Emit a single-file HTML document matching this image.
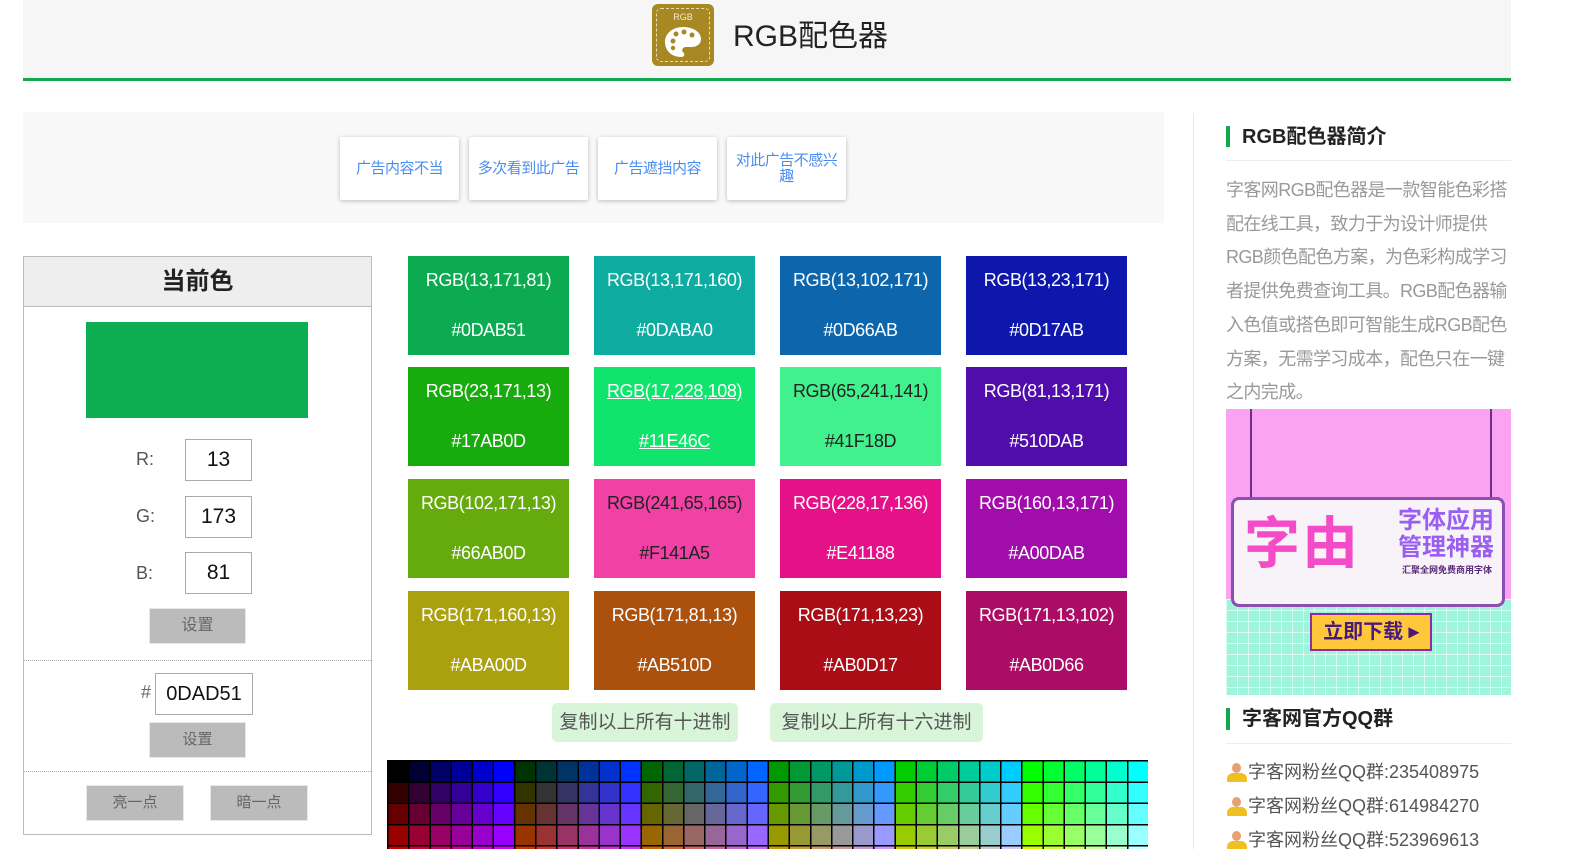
<!DOCTYPE html>
<html><head><meta charset="utf-8"><style>
*{margin:0;padding:0;box-sizing:border-box}
html,body{width:1580px;height:849px;overflow:hidden}
body{background:#fff;position:relative;font-family:"Liberation Sans","Noto Sans CJK SC",sans-serif}
.a{position:absolute}
.hdr{left:23px;top:0;width:1488px;background:#f6f6f6;border-bottom:3px solid #12a84f;height:81px}
.adb{width:119px;height:63px;top:137px;background:#fff;box-shadow:0 1px 4px rgba(0,0,0,.25);border-radius:2px;color:#4a8df0;font-size:15px;display:flex;align-items:center;justify-content:center;text-align:center;line-height:16px;padding:0 6px;letter-spacing:-.5px}
.card{width:161px;height:99px;color:#fff;font-size:18px;text-align:center;letter-spacing:-.4px}
.card div{height:49.5px;line-height:49.5px}
.dk{color:#222}
.inp{border:1px solid #aaa;background:#fff;font-size:21px;color:#111;text-align:center;line-height:40px}
.lbl{font-size:18px;color:#555}
.btn{background:#bbb;color:#666;font-size:16px;text-align:center;border:1px solid #e8e8e8}
.copy{top:703px;height:39px;background:#d9f5d9;border-radius:5px;color:#555;font-size:19px;text-align:center;line-height:39px}
.qq{left:1226px;font-size:18px;color:#555;height:26px;line-height:26px;display:flex;align-items:center}
.qq i{display:inline-block;width:22px;height:20px;position:relative}
.qq i:before{content:"";position:absolute;left:6px;top:1px;width:9px;height:10px;border-radius:50%;background:#e8a070}
.qq i:after{content:"";position:absolute;left:1px;top:11px;width:20px;height:9px;border-radius:6px 6px 1px 1px;background:#f0c020}
</style></head><body>
<div class="a hdr"></div>
<div class="a" style="left:652px;top:4px;width:62px;height:62px;background:#a88822;border-radius:6px;"></div>
<div class="a" style="left:656px;top:8px;width:54px;height:54px;border:1px dashed #e8dcb0;border-radius:5px"></div>
<div class="a" style="left:652px;top:12px;width:62px;text-align:center;color:#f4ecd0;font-size:9px">RGB</div>
<svg class="a" style="left:664px;top:26px" width="38" height="32" viewBox="0 0 38 32"><path d="M19 1C8 1 1 8 1 16c0 8 6 15 16 15 4 0 4-3 2-5-2-2 0-5 3-5h5c6 0 10-3 10-8C37 6 29 1 19 1z" fill="#fff"/><circle cx="9" cy="15" r="2.5" fill="#a88822"/><circle cx="12" cy="8" r="2.5" fill="#a88822"/><circle cx="20" cy="6" r="2.5" fill="#a88822"/><circle cx="28" cy="9" r="2.5" fill="#a88822"/><circle cx="9" cy="22" r="2.2" fill="#a88822"/></svg>
<div class="a" style="left:733px;top:17px;font-size:30px;color:#222;line-height:40px">RGB配色器</div>

<div class="a" style="left:23px;top:112px;width:1141px;height:111px;background:#f8f8f8"></div>
<div class="a adb" style="left:340px">广告内容不当</div>
<div class="a adb" style="left:469px">多次看到此广告</div>
<div class="a adb" style="left:598px">广告遮挡内容</div>
<div class="a adb" style="left:727px">对此广告不感兴趣</div>

<div class="a" style="left:23px;top:256px;width:349px;height:579px;border:1px solid #bbb"></div>
<div class="a" style="left:24px;top:257px;width:347px;height:50px;background:#eee;border-bottom:1px solid #bbb;text-align:center;font-size:24px;font-weight:bold;color:#222;line-height:50px">当前色</div>
<div class="a" style="left:86px;top:322px;width:222px;height:96px;background:#0dad51"></div>
<div class="a lbl" style="left:136px;top:449px">R:</div>
<div class="a lbl" style="left:136px;top:506px">G:</div>
<div class="a lbl" style="left:136px;top:563px">B:</div>
<div class="a inp" style="left:185px;top:439px;width:67px;height:42px">13</div>
<div class="a inp" style="left:185px;top:496px;width:67px;height:42px">173</div>
<div class="a inp" style="left:185px;top:552px;width:67px;height:42px">81</div>
<div class="a btn" style="left:149px;top:608px;width:97px;height:36px;line-height:34px">设置</div>
<div class="a" style="left:24px;top:660px;width:347px;border-top:1px dotted #aaa"></div>
<div class="a lbl" style="left:141px;top:682px;color:#666">#</div>
<div class="a inp" style="left:155px;top:673px;width:98px;height:42px;font-size:20px">0DAD51</div>
<div class="a btn" style="left:149px;top:722px;width:97px;height:36px;line-height:34px;font-size:15px">设置</div>
<div class="a" style="left:24px;top:771px;width:347px;border-top:1px dotted #aaa"></div>
<div class="a btn" style="left:86px;top:785px;width:98px;height:36px;line-height:34px;font-size:15px">亮一点</div>
<div class="a btn" style="left:210px;top:785px;width:98px;height:36px;line-height:34px;font-size:15px">暗一点</div>

<div class="a card" style="left:408px;top:256px;background:#0dab51"><div>RGB(13,171,81)</div><div>#0DAB51</div></div>
<div class="a card" style="left:594px;top:256px;background:#0daba0"><div>RGB(13,171,160)</div><div>#0DABA0</div></div>
<div class="a card" style="left:780px;top:256px;background:#0d66ab"><div>RGB(13,102,171)</div><div>#0D66AB</div></div>
<div class="a card" style="left:966px;top:256px;background:#0d17ab"><div>RGB(13,23,171)</div><div>#0D17AB</div></div>
<div class="a card" style="left:408px;top:367px;background:#17ab0d"><div>RGB(23,171,13)</div><div>#17AB0D</div></div>
<div class="a card" style="left:594px;top:367px;background:#11e46c;text-decoration:underline"><div>RGB(17,228,108)</div><div>#11E46C</div></div>
<div class="a card dk" style="left:780px;top:367px;background:#41f18d"><div>RGB(65,241,141)</div><div>#41F18D</div></div>
<div class="a card" style="left:966px;top:367px;background:#510dab"><div>RGB(81,13,171)</div><div>#510DAB</div></div>
<div class="a card" style="left:408px;top:479px;background:#66ab0d"><div>RGB(102,171,13)</div><div>#66AB0D</div></div>
<div class="a card dk" style="left:594px;top:479px;background:#f141a5"><div>RGB(241,65,165)</div><div>#F141A5</div></div>
<div class="a card" style="left:780px;top:479px;background:#e41188"><div>RGB(228,17,136)</div><div>#E41188</div></div>
<div class="a card" style="left:966px;top:479px;background:#a00dab"><div>RGB(160,13,171)</div><div>#A00DAB</div></div>
<div class="a card" style="left:408px;top:591px;background:#aba00d"><div>RGB(171,160,13)</div><div>#ABA00D</div></div>
<div class="a card" style="left:594px;top:591px;background:#ab510d"><div>RGB(171,81,13)</div><div>#AB510D</div></div>
<div class="a card" style="left:780px;top:591px;background:#ab0d17"><div>RGB(171,13,23)</div><div>#AB0D17</div></div>
<div class="a card" style="left:966px;top:591px;background:#ab0d66"><div>RGB(171,13,102)</div><div>#AB0D66</div></div>

<div class="a copy" style="left:552px;width:186px">复制以上所有十进制</div>
<div class="a copy" style="left:770px;width:213px">复制以上所有十六进制</div>

<div class="a" style="left:387px;top:760px;width:761px;height:130px;background:#000;isolation:isolate;overflow:hidden">
<div class="a" style="inset:0;background:linear-gradient(to right,#000 0 16.667%,#003 16.667% 33.333%,#006 33.333% 50%,#009 50% 66.667%,#00c 66.667% 83.333%,#00f 83.333%);background-size:126.833px 100%;mix-blend-mode:screen"></div>
<div class="a" style="inset:0;background:linear-gradient(to right,#000 0 16.667%,#030 16.667% 33.333%,#060 33.333% 50%,#090 50% 66.667%,#0c0 66.667% 83.333%,#0f0 83.333%);mix-blend-mode:screen"></div>
<div class="a" style="inset:0;background:linear-gradient(to bottom,#000 0 21.3px,#300 21.3px 42.6px,#600 42.6px 63.9px,#900 63.9px 85.2px,#c00 85.2px 106.5px,#f00 106.5px);mix-blend-mode:screen"></div>
<div class="a" style="inset:0;background:repeating-linear-gradient(to right,#000 0 1.5px,transparent 1.5px 21.139px),repeating-linear-gradient(to bottom,#000 0 1.5px,transparent 1.5px 21.3px)"></div>
</div>

<div class="a" style="left:1193px;top:113px;width:1px;height:736px;background:#e6e6e6"></div>
<div class="a" style="left:1226px;top:126px;width:4px;height:21px;background:#12a84f"></div>
<div class="a" style="left:1242px;top:123px;font-size:20px;font-weight:bold;color:#222;line-height:28px">RGB配色器简介</div>
<div class="a" style="left:1226px;top:160px;width:285px;height:1px;background:#eee"></div>
<div class="a" style="left:1226px;top:174px;width:285px;font-size:18px;line-height:33.7px;color:#999;letter-spacing:-.6px">字客网RGB配色器是一款智能色彩搭配在线工具，致力于为设计师提供RGB颜色配色方案，为色彩构成学习者提供免费查询工具。RGB配色器输入色值或搭色即可智能生成RGB配色方案，无需学习成本，配色只在一键之内完成。</div>

<div class="a" style="left:1226px;top:409px;width:285px;height:286px;background:#fba2f2;overflow:hidden">
<div class="a" style="left:0;top:190px;width:285px;height:96px;background:#9ef5dc;background-image:linear-gradient(to right,rgba(255,255,255,.6) 1px,transparent 1px),linear-gradient(rgba(255,255,255,.6) 1px,transparent 1px);background-size:11px 11px"></div>
<div class="a" style="left:5px;top:88px;width:274px;height:110px;background:#f8f3f8;border:3px solid #8a4fb0;border-radius:8px"></div>
<div class="a" style="left:24px;top:0;width:2px;height:88px;background:#6a2f8a"></div>
<div class="a" style="left:264px;top:0;width:2px;height:88px;background:#6a2f8a"></div>
<div class="a" style="left:18px;top:92px;font-size:56px;font-weight:bold;color:#f44cc8;line-height:86px;letter-spacing:2px">字由</div>
<div class="a" style="left:172px;top:98px;font-size:24px;font-weight:bold;color:#9a5ef0;line-height:27px">字体应用<br>管理神器</div>
<div class="a" style="left:176px;top:154px;font-size:9px;font-weight:bold;color:#5a2a7a">汇聚全网免费商用字体</div>
<div class="a" style="left:84px;top:204px;width:122px;height:38px;background:#ffc83c;border:2px solid #8a2fa0;font-size:20px;font-weight:bold;color:#4a1a7a;text-align:center;line-height:34px">立即下载 ▸</div>
</div>

<div class="a" style="left:1226px;top:708px;width:4px;height:22px;background:#12a84f"></div>
<div class="a" style="left:1242px;top:705px;font-size:20px;font-weight:bold;color:#222;line-height:28px">字客网官方QQ群</div>
<div class="a" style="left:1226px;top:743px;width:285px;height:1px;background:#eee"></div>
<div class="a qq" style="top:759px"><i></i>字客网粉丝QQ群:235408975</div>
<div class="a qq" style="top:793px"><i></i>字客网粉丝QQ群:614984270</div>
<div class="a qq" style="top:827px"><i></i>字客网粉丝QQ群:523969613</div>
</body></html>
